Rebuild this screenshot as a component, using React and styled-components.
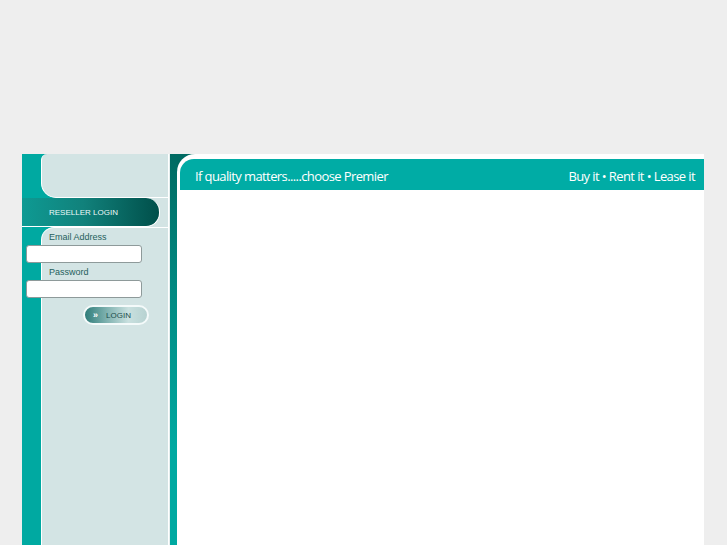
import { createGlobalStyle, styled } from 'styled-components';

const GlobalStyle = createGlobalStyle`
    html, body {
        margin: 0;
        padding: 0;
        background: #eeeeee;
        overflow: hidden;
    }
`;

export default function App() {
    return (
        <>
            <GlobalStyle />
            <Page>
                <LeftCol>
                    <TopPanel />
                    <BarRow>
                        <ResellerBar>RESELLER LOGIN</ResellerBar>
                    </BarRow>
                    <LoginPanel>
                        <Label>Email Address</Label>
                        <Input type="text" />
                        <Label>Password</Label>
                        <Input type="password" />
                        <LoginButton>
                            <Arrows>&raquo;</Arrows>
                            LOGIN
                        </LoginButton>
                    </LoginPanel>
                </LeftCol>
                <Strip />
                <Main>
                    <Card>
                        <HeaderBar>
                            <Slogan>If quality matters.....choose Premier</Slogan>
                            <Slogan>Buy it • Rent it • Lease it</Slogan>
                        </HeaderBar>
                    </Card>
                </Main>
            </Page>
        </>
    );
}

const Page = styled.div`
    display: flex;
    width: 682px;
    height: 420px;
    margin: 154px 0 0 22px;
`;

const LeftCol = styled.div`
    display: flex;
    flex-direction: column;
    width: 147px;
    background: #00a9a1;
    border-right: 1px solid #e6efef;
`;

const TopPanel = styled.div`
    height: 43px;
    margin-left: 19px;
    background: #d3e4e4;
    border: 1px solid #ffffff;
    border-top: none;
    border-radius: 6px 0 0 15px;
`;

// teal on the left, light panel behind the bar's rounded end
const BarRow = styled.div`
    display: flex;
    background: linear-gradient(90deg, #00a9a1 19px, #d3e4e4 19px);
    border-right: 1px solid #ffffff;
`;

const ResellerBar = styled.div`
    display: flex;
    align-items: center;
    flex: 1;
    height: 28px;
    margin-right: 8px;
    padding-left: 27px;
    background: linear-gradient(90deg, #0e9a93 0%, #11817b 45%, #004f4a 100%);
    border: 1px solid #ffffff;
    border-left: none;
    border-top: none;
    border-radius: 0 14px 14px 0;
    color: #eef9f8;
    font-family: 'Liberation Sans', Arial, sans-serif;
    font-size: 8px;
`;

const LoginPanel = styled.div`
    flex: 1;
    display: flex;
    flex-direction: column;
    margin-left: 19px;
    padding: 3px 0 0 7px;
    background: #d3e4e4;
    border: 1px solid #ffffff;
    border-bottom: none;
    border-radius: 13px 0 0 0;
`;

const Label = styled.div`
    height: 12px;
    color: #1f5f5c;
    font-family: 'Liberation Sans', Arial, sans-serif;
    font-size: 9px;
    line-height: 12px;
`;

const Input = styled.input`
    box-sizing: border-box;
    width: 116px;
    height: 18px;
    margin: 2px 0 3px -23px;
    padding: 0 3px;
    background: #ffffff;
    border: 1px solid #8e9a9a;
    border-radius: 3px;
    outline: none;
`;

const LoginButton = styled.button`
    display: flex;
    align-items: center;
    gap: 8px;
    box-sizing: border-box;
    width: 66px;
    height: 20px;
    margin: 4px 0 0 34px;
    padding: 0 0 0 8px;
    background: linear-gradient(90deg, #2f7d7a 0%, #7fb2b0 35%, #c9e0df 70%, #b7d2d1 100%);
    border: 2px solid #f4fafa;
    border-radius: 11px;
    color: #1c4d4c;
    font-family: 'Liberation Sans', Arial, sans-serif;
    font-size: 8px;
    cursor: pointer;
`;

const Arrows = styled.span`
    color: #ffffff;
    font-size: 9px;
    font-weight: bold;
`;

const Strip = styled.div`
    width: 7px;
    background: linear-gradient(180deg, #006a62 0%, #00877f 30%, #00a9a1 70%);
`;

const Main = styled.div`
    flex: 1;
    display: flex;
    background: #006a62;
`;

const Card = styled.div`
    flex: 1;
    padding: 5px 0 0 3px;
    background: #ffffff;
    border-radius: 18px 0 0 0;
`;

const HeaderBar = styled.div`
    display: flex;
    justify-content: space-between;
    align-items: center;
    height: 31px;
    padding: 2px 9px 0 15px;
    box-sizing: border-box;
    background: #00aca5;
    border-radius: 14px 0 0 0;
`;

const Slogan = styled.span`
    color: #ffffff;
    font-family: 'Open Sans', 'Noto Sans', sans-serif;
    font-size: 13px;
    letter-spacing: -0.6px;
`;
